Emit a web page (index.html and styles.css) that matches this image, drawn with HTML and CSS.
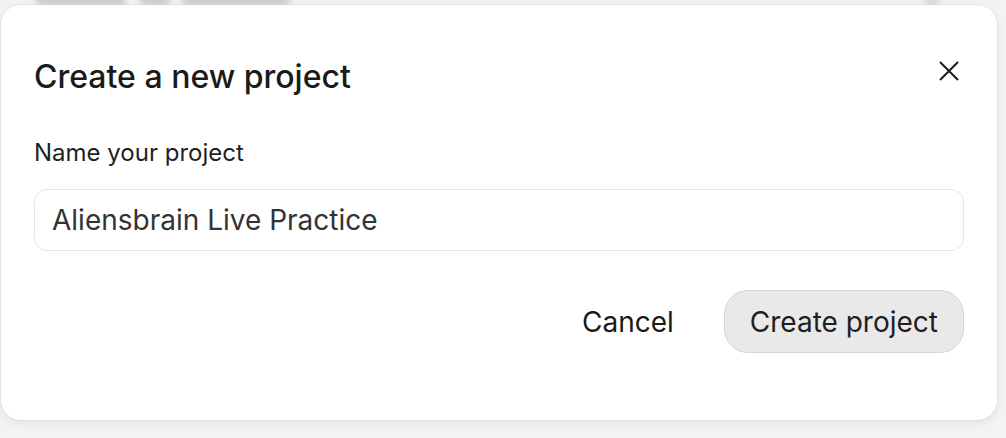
FILE: index.html
```html
<!DOCTYPE html>
<html lang="en">
<head>
<meta charset="utf-8">
<title>Create a new project</title>
<link rel="stylesheet" href="styles.css">
</head>
<body>
<div class="backdrop">
  <div class="bg-blur b1"></div>
  <div class="bg-blur b2"></div>
  <div class="bg-blur b3"></div>
  <div class="bg-blur b4"></div>
  <div class="dialog" role="dialog" aria-labelledby="dlg-title">
    <div class="dialog-header">
      <h2 id="dlg-title" class="dialog-title">Create a new project</h2>
      <button class="close-btn" aria-label="Close">
        <svg width="22" height="22" viewBox="0 0 22 22" fill="none" stroke="#1a1a1a" stroke-width="2">
          <path d="M2 2 L20 20 M20 2 L2 20"/>
        </svg>
      </button>
    </div>
    <label class="field-label" for="proj">Name your project</label>
    <div class="input-box">
      <span class="input-text">Aliensbrain Live Practice</span>
    </div>
    <div class="actions">
      <button class="btn-cancel">Cancel</button>
      <button class="btn-primary">Create project</button>
    </div>
  </div>
</div>
</body>
</html>
```

FILE: styles.css
```css
* { box-sizing: border-box; }
html, body {
  margin: 0;
  padding: 0;
  width: 1006px;
  height: 438px;
  overflow: hidden;
  background: #f3f3f3;
  font-family: Inter, "Noto Sans", sans-serif;
}
.backdrop {
  position: relative;
  width: 1006px;
  height: 438px;
  padding: 5px 9px 0 1px;
}
.bg-blur {
  position: absolute;
  background: #c4c4c4;
  filter: blur(3px);
  border-radius: 3px;
}
.b1 { top: -5px; left: 36px; width: 90px; height: 9px; }
.b2 { top: -5px; left: 140px; width: 30px; height: 9px; }
.b3 { top: -5px; left: 182px; width: 108px; height: 9px; }
.b4 { top: -5px; left: 925px; width: 14px; height: 9px; background: #cfcfcf; }
.dialog {
  position: relative;
  background: #fff;
  border-radius: 20px;
  width: 996px;
  height: 415px;
  padding: 52px 33px 0 33px;
  box-shadow: 0 3px 10px rgba(0,0,0,0.07), 0 0 0 1px rgba(0,0,0,0.035);
  display: flex;
  flex-direction: column;
}
.dialog-header {
  display: flex;
  align-items: center;
  justify-content: space-between;
  height: 40px;
}
.dialog-title {
  margin: 0;
  font-size: 32px;
  line-height: 40px;
  font-weight: 500;
  color: #1a1a1a;
}
.close-btn {
  background: none;
  border: 0;
  padding: 0;
  width: 22px;
  height: 22px;
  margin-right: 4px;
  margin-top: -13px;
  display: flex;
}
.field-label {
  margin-top: 41px;
  font-size: 24px;
  line-height: 30px;
  color: #1f1f1f;
}
.input-box {
  margin-top: 21px;
  height: 62px;
  border: 1.5px solid #e6e6e6;
  border-radius: 13px;
  display: flex;
  align-items: center;
  padding-left: 17px;
}
.input-text {
  font-size: 28px;
  color: #333;
}
.actions {
  margin-top: 39px;
  display: flex;
  justify-content: flex-end;
  align-items: center;
  gap: 50px;
}
.btn-cancel {
  background: none;
  border: 0;
  padding: 0;
  font-family: inherit;
  font-size: 28px;
  font-weight: 400;
  color: #1a1a1a;
}
.btn-primary {
  font-family: inherit;
  font-size: 28px;
  font-weight: 400;
  color: #1f1f1f;
  background: #e9e9e9;
  border: 1.5px solid #d6d6d6;
  border-radius: 24px;
  height: 63px;
  padding: 0 25px;
}
```
